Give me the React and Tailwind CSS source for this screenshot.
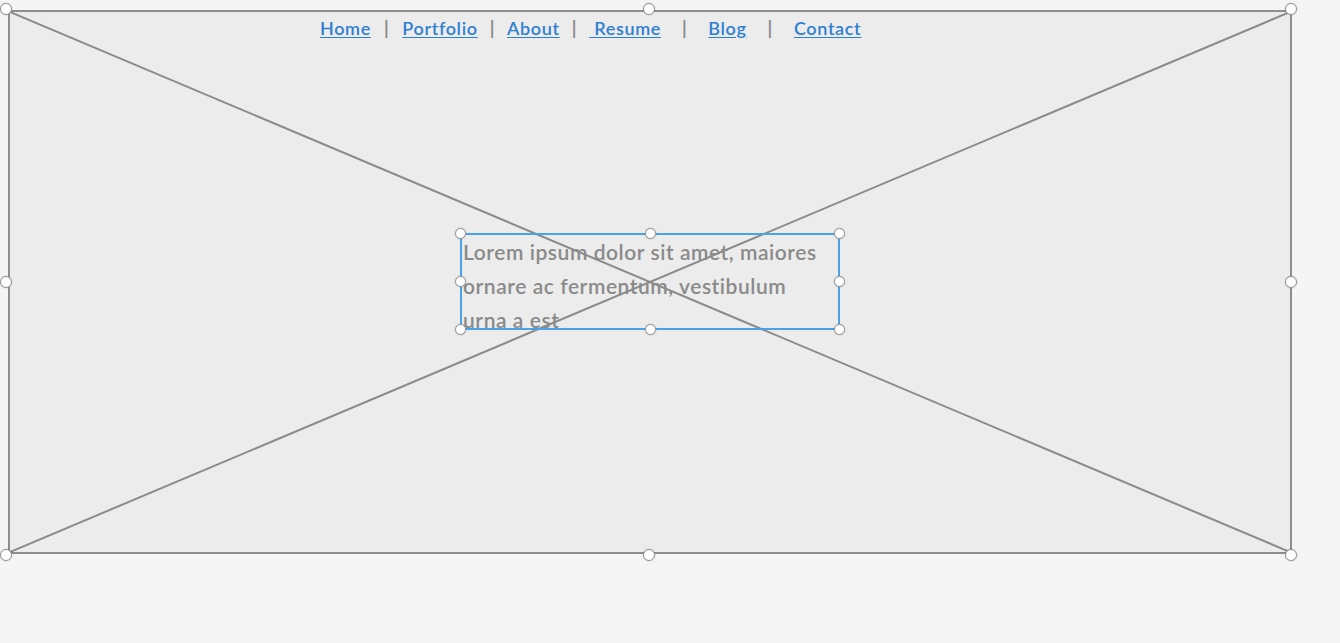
import React from "react";

function Dot({ size }) {
  return (
    <span
      className={`block rounded-full bg-white border border-[#929292] shadow-[0_0_2px_rgba(0,0,0,0.2)] ${size}`}
    />
  );
}

// selection frame: 8 handles laid out on the edges of the selected element
function HandleFrame({ inset, size }) {
  return (
    <div className={`absolute pointer-events-none flex flex-col justify-between ${inset}`}>
      <div className="flex justify-between">
        <Dot size={size} />
        <Dot size={size} />
        <Dot size={size} />
      </div>
      <div className="flex justify-between">
        <Dot size={size} />
        <Dot size={size} />
      </div>
      <div className="flex justify-between">
        <Dot size={size} />
        <Dot size={size} />
        <Dot size={size} />
      </div>
    </div>
  );
}

const links = [
  { label: "Home", sep: "mx-[13px]" },
  { label: "Portfolio", sep: "mx-[12px]" },
  { label: "About", sep: "mx-[12px]" },
  { label: "\u00a0Resume", sep: "mx-[21px]" },
  { label: "Blog", sep: "mx-[21px]" },
  { label: "Contact", sep: null },
];

export default function App() {
  return (
    <div className="w-[1340px] h-[643px] bg-[#f5f5f5] overflow-hidden font-['Lato',sans-serif]">
      <div className="relative ml-[8px] mt-[10px] w-[1284px] h-[544px] bg-[#ececec] border-2 border-[#8e8e8e]">
        <svg className="absolute inset-0 w-full h-full" viewBox="0 0 1280 540" preserveAspectRatio="none">
          <line x1="0" y1="0" x2="1280" y2="540" stroke="#8a8a8a" strokeWidth="2" />
          <line x1="0" y1="540" x2="1280" y2="0" stroke="#8a8a8a" strokeWidth="2" />
        </svg>

        <div className="relative flex flex-col h-full">
          <nav className="flex items-center pl-[310px] pt-[3px] text-[18px] leading-[26px] font-semibold tracking-[0.65px]">
            {links.map((l) => (
              <React.Fragment key={l.label}>
                <a href="#" className="text-[#2f7fd0] underline underline-offset-2">
                  {l.label}
                </a>
                {l.sep && <span className={`text-[#8a8a8a] font-bold ${l.sep}`}>|</span>}
              </React.Fragment>
            ))}
          </nav>

          <div className="flex-1 flex items-center justify-center pb-[30px]">
            <div className="relative w-[380px] h-[97px] border-2 border-[#4aa3e8]">
              <p className="pl-[1px] text-[21px] leading-[34px] font-semibold tracking-[0.55px] text-[#8a8a8a] whitespace-nowrap">
                Lorem ipsum dolor sit amet, maiores
                <br />
                ornare ac fermentum, vestibulum
                <br />
                urna a est
              </p>
              <HandleFrame inset="-inset-[7px]" size="w-[11px] h-[11px]" />
            </div>
          </div>
        </div>

        <HandleFrame inset="-left-[10px] -right-[7px] -top-[9px] -bottom-[9px]" size="w-[12px] h-[12px]" />
      </div>
    </div>
  );
}
